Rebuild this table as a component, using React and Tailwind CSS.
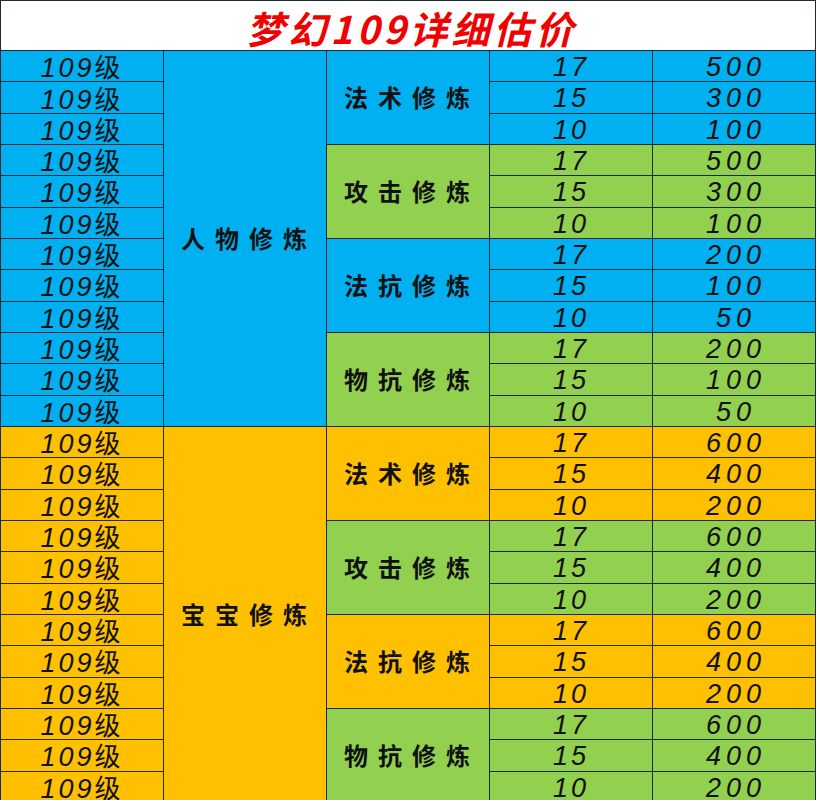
import React from "react";

const BLUE = "bg-[#00b0f0]";
const GREEN = "bg-[#92d050]";
const ORANGE = "bg-[#ffc000]";

const groups = [
  { name: "人物修炼", color: BLUE, subs: [
    { name: "法术修炼", color: BLUE, vals: [["17", "500"], ["15", "300"], ["10", "100"]] },
    { name: "攻击修炼", color: GREEN, vals: [["17", "500"], ["15", "300"], ["10", "100"]] },
    { name: "法抗修炼", color: BLUE, vals: [["17", "200"], ["15", "100"], ["10", "50"]] },
    { name: "物抗修炼", color: GREEN, vals: [["17", "200"], ["15", "100"], ["10", "50"]] },
  ] },
  { name: "宝宝修炼", color: ORANGE, subs: [
    { name: "法术修炼", color: ORANGE, vals: [["17", "600"], ["15", "400"], ["10", "200"]] },
    { name: "攻击修炼", color: GREEN, vals: [["17", "600"], ["15", "400"], ["10", "200"]] },
    { name: "法抗修炼", color: ORANGE, vals: [["17", "600"], ["15", "400"], ["10", "200"]] },
    { name: "物抗修炼", color: GREEN, vals: [["17", "600"], ["15", "400"], ["10", "200"]] },
  ] },
];

const cell = "border-r border-b border-[#1c2a38] flex items-center justify-center";
const num = "font-['Liberation_Sans','Noto_Sans_CJK_SC',sans-serif] italic text-[27px] leading-none text-[#111] tracking-[3px] pt-[3px]";
const cjk = "font-['Noto_Sans_CJK_SC',sans-serif] font-semibold text-[24px] leading-none text-[#111] tracking-[10px]";

const App = () => {
  return (
    <div className="w-[816px] h-[800px] overflow-hidden bg-white">
      <div className="h-[51px] border border-[#1c2a38] flex items-center justify-center">
        <h1 className="font-['Noto_Sans_CJK_SC',sans-serif] font-bold italic text-[38px] leading-none text-[#f20000] tracking-[4px] pl-2 pt-1">
          梦幻109详细估价
        </h1>
      </div>
      <div className="grid grid-cols-[163px_163px_163px_163px_1fr] auto-rows-[31.33px] border-l border-[#1c2a38]">
        {groups.map((g, gi) => (
          <React.Fragment key={gi}>
            {g.subs.map((s, si) =>
              s.vals.map((v, vi) => (
                <React.Fragment key={si + "-" + vi}>
                  <div className={`${cell} ${g.color} col-start-1`}>
                    <span className={num}>109<span className="not-italic font-['Noto_Sans_CJK_SC',sans-serif] text-[26px]">级</span></span>
                  </div>
                  {si === 0 && vi === 0 && (
                    <div className={`${cell} ${g.color} col-start-2 row-span-12`}>
                      <span className={cjk + " pl-2"}>{g.name}</span>
                    </div>
                  )}
                  {vi === 0 && (
                    <div className={`${cell} ${s.color} col-start-3 row-span-3`}>
                      <span className={cjk + " pl-2"}>{s.name}</span>
                    </div>
                  )}
                  <div className={`${cell} ${s.color} col-start-4`}>
                    <span className={num}>{v[0]}</span>
                  </div>
                  <div className={`${cell} ${s.color} col-start-5`}>
                    <span className={num + " tracking-[5px] pl-1"}>{v[1]}</span>
                  </div>
                </React.Fragment>
              ))
            )}
          </React.Fragment>
        ))}
      </div>
    </div>
  );
};

export default App;
